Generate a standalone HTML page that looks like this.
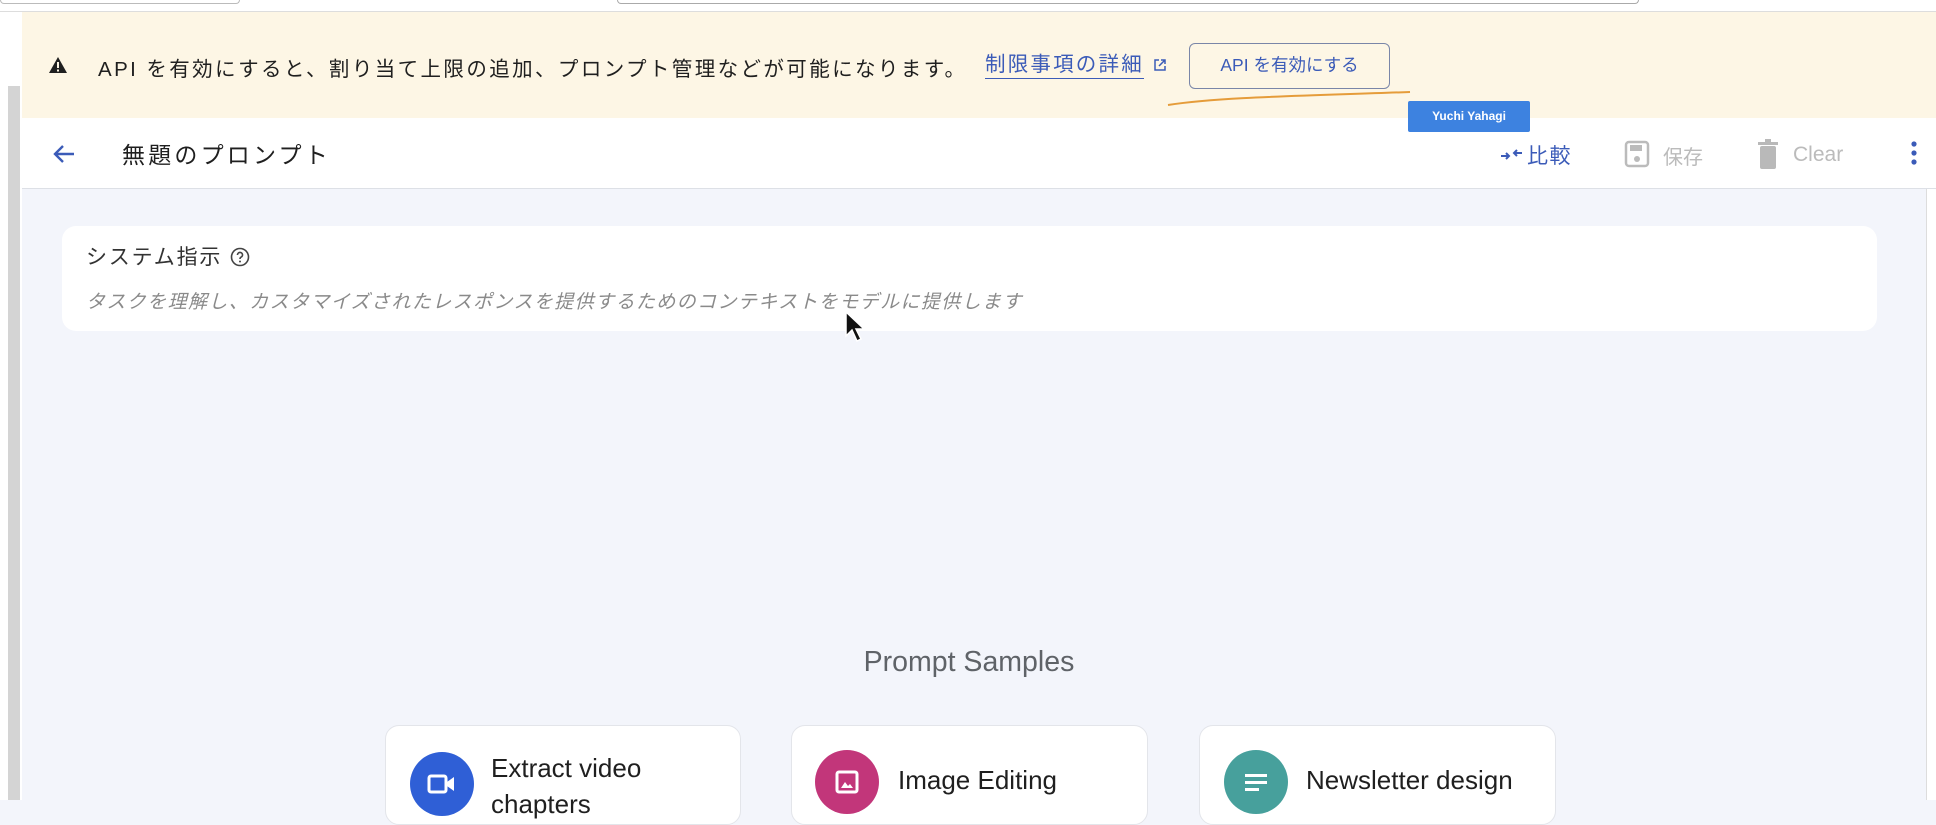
<!DOCTYPE html>
<html><head><meta charset="utf-8"><style>
*{margin:0;padding:0;box-sizing:border-box}
body{width:1936px;height:800px;overflow:hidden;background:#f3f5fb;font-family:"Liberation Sans","Noto Sans CJK JP",sans-serif;position:relative;color:#1f1f1f}
.abs{position:absolute}
</style></head><body>
<div class="abs" style="left:0;top:0;width:1936px;height:12px;background:#fff;border-bottom:1px solid #ddd"></div>
<div class="abs" style="left:0;top:0;width:240px;height:4px;border:1px solid #bbb;border-top:none;border-radius:0 0 4px 4px"></div>
<div class="abs" style="left:617px;top:0;width:1022px;height:4px;border:1px solid #aaa;border-top:none;border-radius:0 0 4px 4px"></div>
<div class="abs" style="left:0;top:12px;width:22px;height:788px;background:#fff"></div>
<div class="abs" style="left:8px;top:86px;width:12px;height:714px;background:#d4d4d4"></div>
<!-- banner -->
<div class="abs" style="left:22px;top:12px;width:1914px;height:106px;background:#fdf6e5"></div>
<svg class="abs" style="left:48px;top:56px" width="20" height="18" viewBox="0 0 20 18"><path d="M10 1L19 17H1Z" fill="#1f1f1f"/><rect x="9" y="6" width="2" height="6" fill="#fdf6e5"/><rect x="9" y="13.5" width="2" height="2" fill="#fdf6e5"/></svg>
<div class="abs" style="left:98px;top:52px;font-size:20.5px;letter-spacing:2.4px;white-space:nowrap;color:#1f1f1f">API を有効にすると、割り当て上限の追加、プロンプト管理などが可能になります。</div>
<div class="abs" style="left:985px;top:52px;font-size:20.5px;letter-spacing:2.2px;white-space:nowrap;color:#3b5bb8;border-bottom:1.5px solid #3b5bb8;line-height:26px">制限事項の詳細</div>
<svg class="abs" style="left:1153px;top:58px" width="14" height="14" viewBox="0 0 14 14"><path d="M6 2H2v10h10V8M8 2h4v4M12 2L6 8" fill="none" stroke="#3b5bb8" stroke-width="1.5"/></svg>
<div class="abs" style="left:1189px;top:43px;width:201px;height:46px;border:1.5px solid #7a86a8;border-radius:6px;font-size:17.5px;color:#3b5bb8;text-align:center;line-height:43px;white-space:nowrap">API を有効にする</div>
<svg class="abs" style="left:1160px;top:84px" width="260" height="24"><path d="M8 21C60 13 140 12 250 8" fill="none" stroke="#e59c3a" stroke-width="2"/></svg>
<div class="abs" style="left:1408px;top:101px;width:122px;height:31px;background:#3d82e0;border-radius:2px;color:#fff;font-size:12px;font-weight:bold;text-align:center;line-height:31px;z-index:3">Yuchi Yahagi</div>
<!-- toolbar -->
<div class="abs" style="left:22px;top:118px;width:1914px;height:71px;background:#fff;border-bottom:1px solid #dde0e6"></div>
<svg class="abs" style="left:50px;top:142px" width="28" height="24" viewBox="0 0 28 24"><path d="M24 12H5M13 4L5 12l8 8" fill="none" stroke="#3b5bb8" stroke-width="2.4"/></svg>
<div class="abs" style="left:122px;top:136px;font-size:23px;letter-spacing:3.2px;white-space:nowrap">無題のプロンプト</div>
<svg class="abs" style="left:1500px;top:144px" width="24" height="20" viewBox="0 0 24 20"><path d="M1 12h8M6 9l3 3-3 3M22 9h-8M17 6l-3 3 3 3" fill="none" stroke="#3b5bb8" stroke-width="2"/></svg>
<div class="abs" style="left:1527px;top:140px;font-size:21px;letter-spacing:1.5px;color:#3b5bb8;white-space:nowrap">比較</div>
<svg class="abs" style="left:1624px;top:140px" width="26" height="28" viewBox="0 0 26 28"><rect x="2" y="2" width="22" height="24" rx="3" fill="none" stroke="#bbb" stroke-width="2.5"/><rect x="6" y="5" width="12" height="6" fill="#bbb"/><circle cx="13" cy="19" r="3" fill="#bbb"/></svg>
<div class="abs" style="left:1663px;top:141px;font-size:20px;color:#bbb;white-space:nowrap">保存</div>
<svg class="abs" style="left:1757px;top:139px" width="22" height="30" viewBox="0 0 22 30"><rect x="1" y="3" width="20" height="3" fill="#b9b9b9"/><rect x="8" y="0" width="6" height="4" fill="#b9b9b9"/><rect x="3" y="7" width="16" height="23" rx="2" fill="#b9b9b9"/></svg>
<div class="abs" style="left:1793px;top:143px;font-size:21px;color:#bbb;white-space:nowrap">Clear</div>
<svg class="abs" style="left:1910px;top:140px" width="8" height="28"><circle cx="4" cy="4" r="2.6" fill="#3b5bb8"/><circle cx="4" cy="13" r="2.6" fill="#3b5bb8"/><circle cx="4" cy="22" r="2.6" fill="#3b5bb8"/></svg>
<!-- system card -->
<div class="abs" style="left:62px;top:226px;width:1815px;height:105px;background:#fff;border-radius:14px"></div>
<div class="abs" style="left:86px;top:241px;font-size:21px;letter-spacing:1.8px;white-space:nowrap;color:#333">システム指示</div>
<svg class="abs" style="left:229px;top:246px" width="22" height="22" viewBox="0 0 22 22"><circle cx="11" cy="11" r="8.5" fill="none" stroke="#444" stroke-width="1.6"/><path d="M8.5 9a2.5 2.5 0 1 1 3.5 2.2c-.8.4-1 1-1 1.8" fill="none" stroke="#444" stroke-width="1.6"/><circle cx="11" cy="15.5" r="1" fill="#444"/></svg>
<div class="abs" style="left:86px;top:287px;font-size:19px;font-style:italic;color:#8a8a8a;white-space:nowrap;letter-spacing:1.4px">タスクを理解し、カスタマイズされたレスポンスを提供するためのコンテキストをモデルに提供します</div>
<svg class="abs" style="left:844px;top:310px" width="22" height="34" viewBox="0 0 22 34"><path d="M2 2v24l6-6 5 11 4-2-5-10h8Z" fill="#111" stroke="#fff" stroke-width="1.5"/></svg>
<!-- samples -->
<div class="abs" style="left:0;top:646px;width:1938px;text-align:center;font-size:28.5px;color:#5f6368">Prompt Samples</div>
<div class="abs" style="left:385px;top:725px;width:356px;height:100px;background:#fff;border-radius:14px;border:1px solid #e3e5ea"></div>
<div class="abs" style="left:791px;top:725px;width:357px;height:100px;background:#fff;border-radius:14px;border:1px solid #e3e5ea"></div>
<div class="abs" style="left:1199px;top:725px;width:357px;height:100px;background:#fff;border-radius:14px;border:1px solid #e3e5ea"></div>
<div class="abs" style="left:410px;top:752px;width:64px;height:64px;border-radius:50%;background:#2f5fd6"></div>
<svg class="abs" style="left:426px;top:771px" width="32" height="26" viewBox="0 0 32 26"><rect x="3" y="5" width="17" height="16" rx="2" fill="none" stroke="#fff" stroke-width="3"/><path d="M21 11l7-5v14l-7-5z" fill="#fff"/></svg>
<div class="abs" style="left:815px;top:750px;width:64px;height:64px;border-radius:50%;background:#c2367a"></div>
<svg class="abs" style="left:834px;top:769px" width="26" height="26" viewBox="0 0 26 26"><rect x="3" y="3" width="20" height="20" rx="2" fill="none" stroke="#fff" stroke-width="3"/><path d="M7 19l4-6 3 4 2-2 3 4z" fill="#fff"/></svg>
<div class="abs" style="left:1224px;top:750px;width:64px;height:64px;border-radius:50%;background:#47a09c"></div>
<svg class="abs" style="left:1243px;top:771px" width="26" height="22"><rect x="2" y="3" width="22" height="3" fill="#fff"/><rect x="2" y="10" width="22" height="3" fill="#fff"/><rect x="2" y="17" width="14" height="3" fill="#fff"/></svg>
<div class="abs" style="left:491px;top:750px;font-size:26px;line-height:36px;width:240px">Extract video<br>chapters</div>
<div class="abs" style="left:898px;top:765px;font-size:26px;white-space:nowrap">Image Editing</div>
<div class="abs" style="left:1306px;top:765px;font-size:26px;white-space:nowrap">Newsletter design</div>
<div class="abs" style="left:1926px;top:189px;width:10px;height:611px;background:#fff;border-left:1px solid #ddd"></div>
</body></html>
